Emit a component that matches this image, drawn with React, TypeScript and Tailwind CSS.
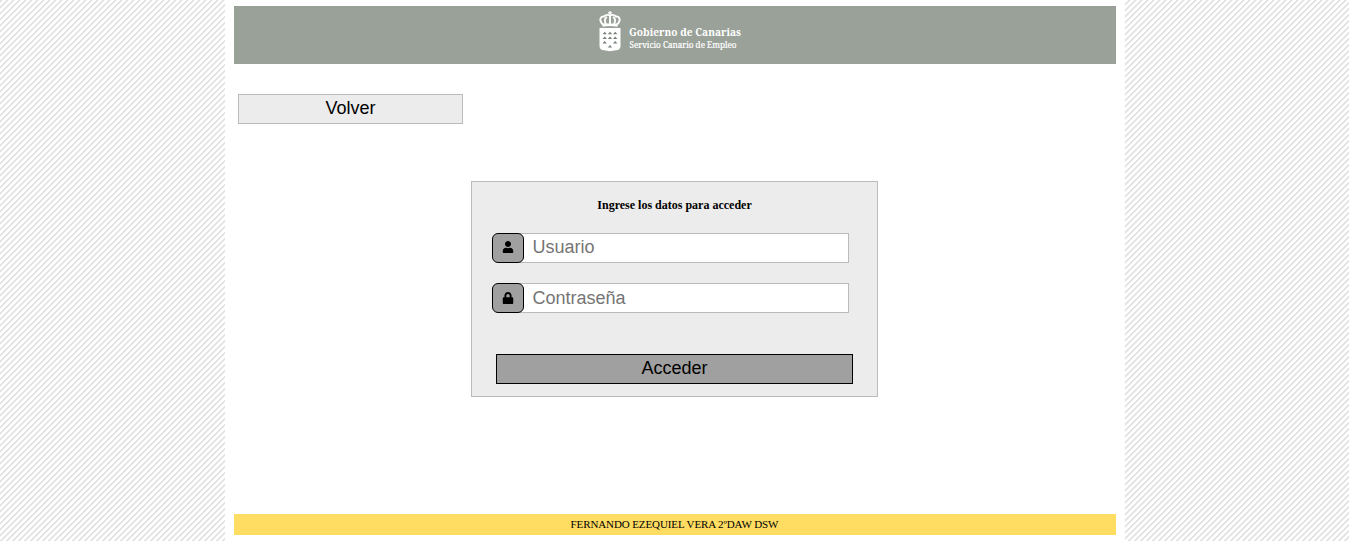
import { FaUser, FaLock } from "react-icons/fa";

function Logo() {
  return (
    <svg width="160" height="58" viewBox="590 6 160 58" role="img" aria-label="Gobierno de Canarias">
      <g fill="#fff">
        <path d="M599.5 28h21v18q0 4-4.500 4.300l-6 .9-6-.9q-4.500-.3-4.500-4.300z" />
        <path d="M609.3 11h1.4v1.3h1.3v1.2h-1.3v1.5h-1.4v-1.5H608v-1.2h1.3z" />
        <path d="M602 23.5h16l-.7 3.3q-7.300-1.500-14.600 0z" />
      </g>
      <g fill="none" stroke="#fff" strokeWidth="1.9">
        <path d="M603 24.500c-5-5-2-8.500 1-8 2-2 4-2 6-1 2-1 4-1 6 1 3-.5 6 3 1 8" />
        <path d="M606 24c-2-3-1-6 1-7M610 24v-9M614 24c2-3 1-6-1-7" />
      </g>
      <path fill="#79827a" d="M602.500 34.300l2.200-2.600 2.200 2.600zM607.800 34.300l2.200-2.600 2.200 2.600zM613 34.300l2.200-2.600 2.200 2.600zM602.500 39l2.200-2.600 2.200 2.600zM607.800 39l2.200-2.600 2.200 2.600zM613 39l2.200-2.600 2.200 2.600zM602.500 43.500l2.200-2.600 2.200 2.600zM613 43.500l2.200-2.600 2.200 2.600zM607.800 47.500l2.200-2.600 2.200 2.600z" />
      <g fill="#fff" className="font-['Noto_Serif','DejaVu_Serif',serif]">
        <text x="629" y="36" fontSize="11" fontWeight="700" textLength="112" lengthAdjust="spacingAndGlyphs">Gobierno de Canarias</text>
        <text x="629.500" y="47.500" fontSize="8" stroke="#fff" strokeWidth=".2" textLength="107" lengthAdjust="spacingAndGlyphs">Servicio Canario de Empleo</text>
      </g>
    </svg>
  );
}

const fields = [
  { label: "Usuario", type: "text", Icon: FaUser, pad: "pb-0.5" },
  { label: "Contraseña", type: "password", Icon: FaLock, pad: "pb-0" },
];

export default function App() {
  return (
    <div className="h-[541px] overflow-hidden bg-white bg-[repeating-linear-gradient(135deg,#e2e2e2_0px,#e2e2e2_1.6px,#fff_2.400px,#fff_4.243px)] font-['Liberation_Serif',serif] text-black">
      <div className="mx-auto flex h-full w-[900px] flex-col bg-white px-[9px] py-1.5">
        <header className="flex h-[58px] shrink-0 justify-center bg-[#9aa198] pr-2.5">
          <Logo />
        </header>
        <main className="flex grow flex-col pt-[30px]">
          <button className="ml-1 flex h-[30px] w-[225px] items-center justify-center border border-[#bbb] bg-[#ececec] pb-0.5 pl-px font-['Liberation_Sans',sans-serif] text-lg leading-5">
            Volver
          </button>
          <form className="mt-[57px] ml-[237px] h-[216px] w-[407px] border border-[#bbb] bg-[#ececec] px-5 pt-4" onSubmit={(e) => e.preventDefault()}>
            <h1 className="pl-px text-center text-xs leading-[15px] font-bold">Ingrese los datos para acceder</h1>
            <div className="mt-5 flex flex-col gap-5">
              {fields.map(({ label, type, Icon, pad }) => (
                <div key={label} className="flex h-[30px] w-[357px]">
                  <span className={`z-10 flex w-8 shrink-0 items-center justify-center rounded-md border border-black bg-[#a0a0a0] pl-px text-xs ${pad}`}>
                    <Icon />
                  </span>
                  <input type={type} placeholder={label} className={`-ml-1 min-w-0 grow border border-[#bbb] bg-white pr-2 pl-3 font-['Liberation_Sans',sans-serif] text-lg leading-5 outline-none placeholder:text-[#757575] ${pad}`} />
                </div>
              ))}
            </div>
            <button className="mt-[41px] ml-1 flex h-[30px] w-[357px] items-center justify-center border border-black bg-[#a0a0a0] pb-0.5 pl-px font-['Liberation_Sans',sans-serif] text-lg leading-5">
              Acceder
            </button>
          </form>
        </main>
        <footer className="h-[21px] shrink-0 bg-[#ffdd62] text-center text-[11px] leading-[21px] tracking-[-0.11px]">
          FERNANDO EZEQUIEL VERA 2ºDAW DSW
        </footer>
      </div>
    </div>
  );
}
